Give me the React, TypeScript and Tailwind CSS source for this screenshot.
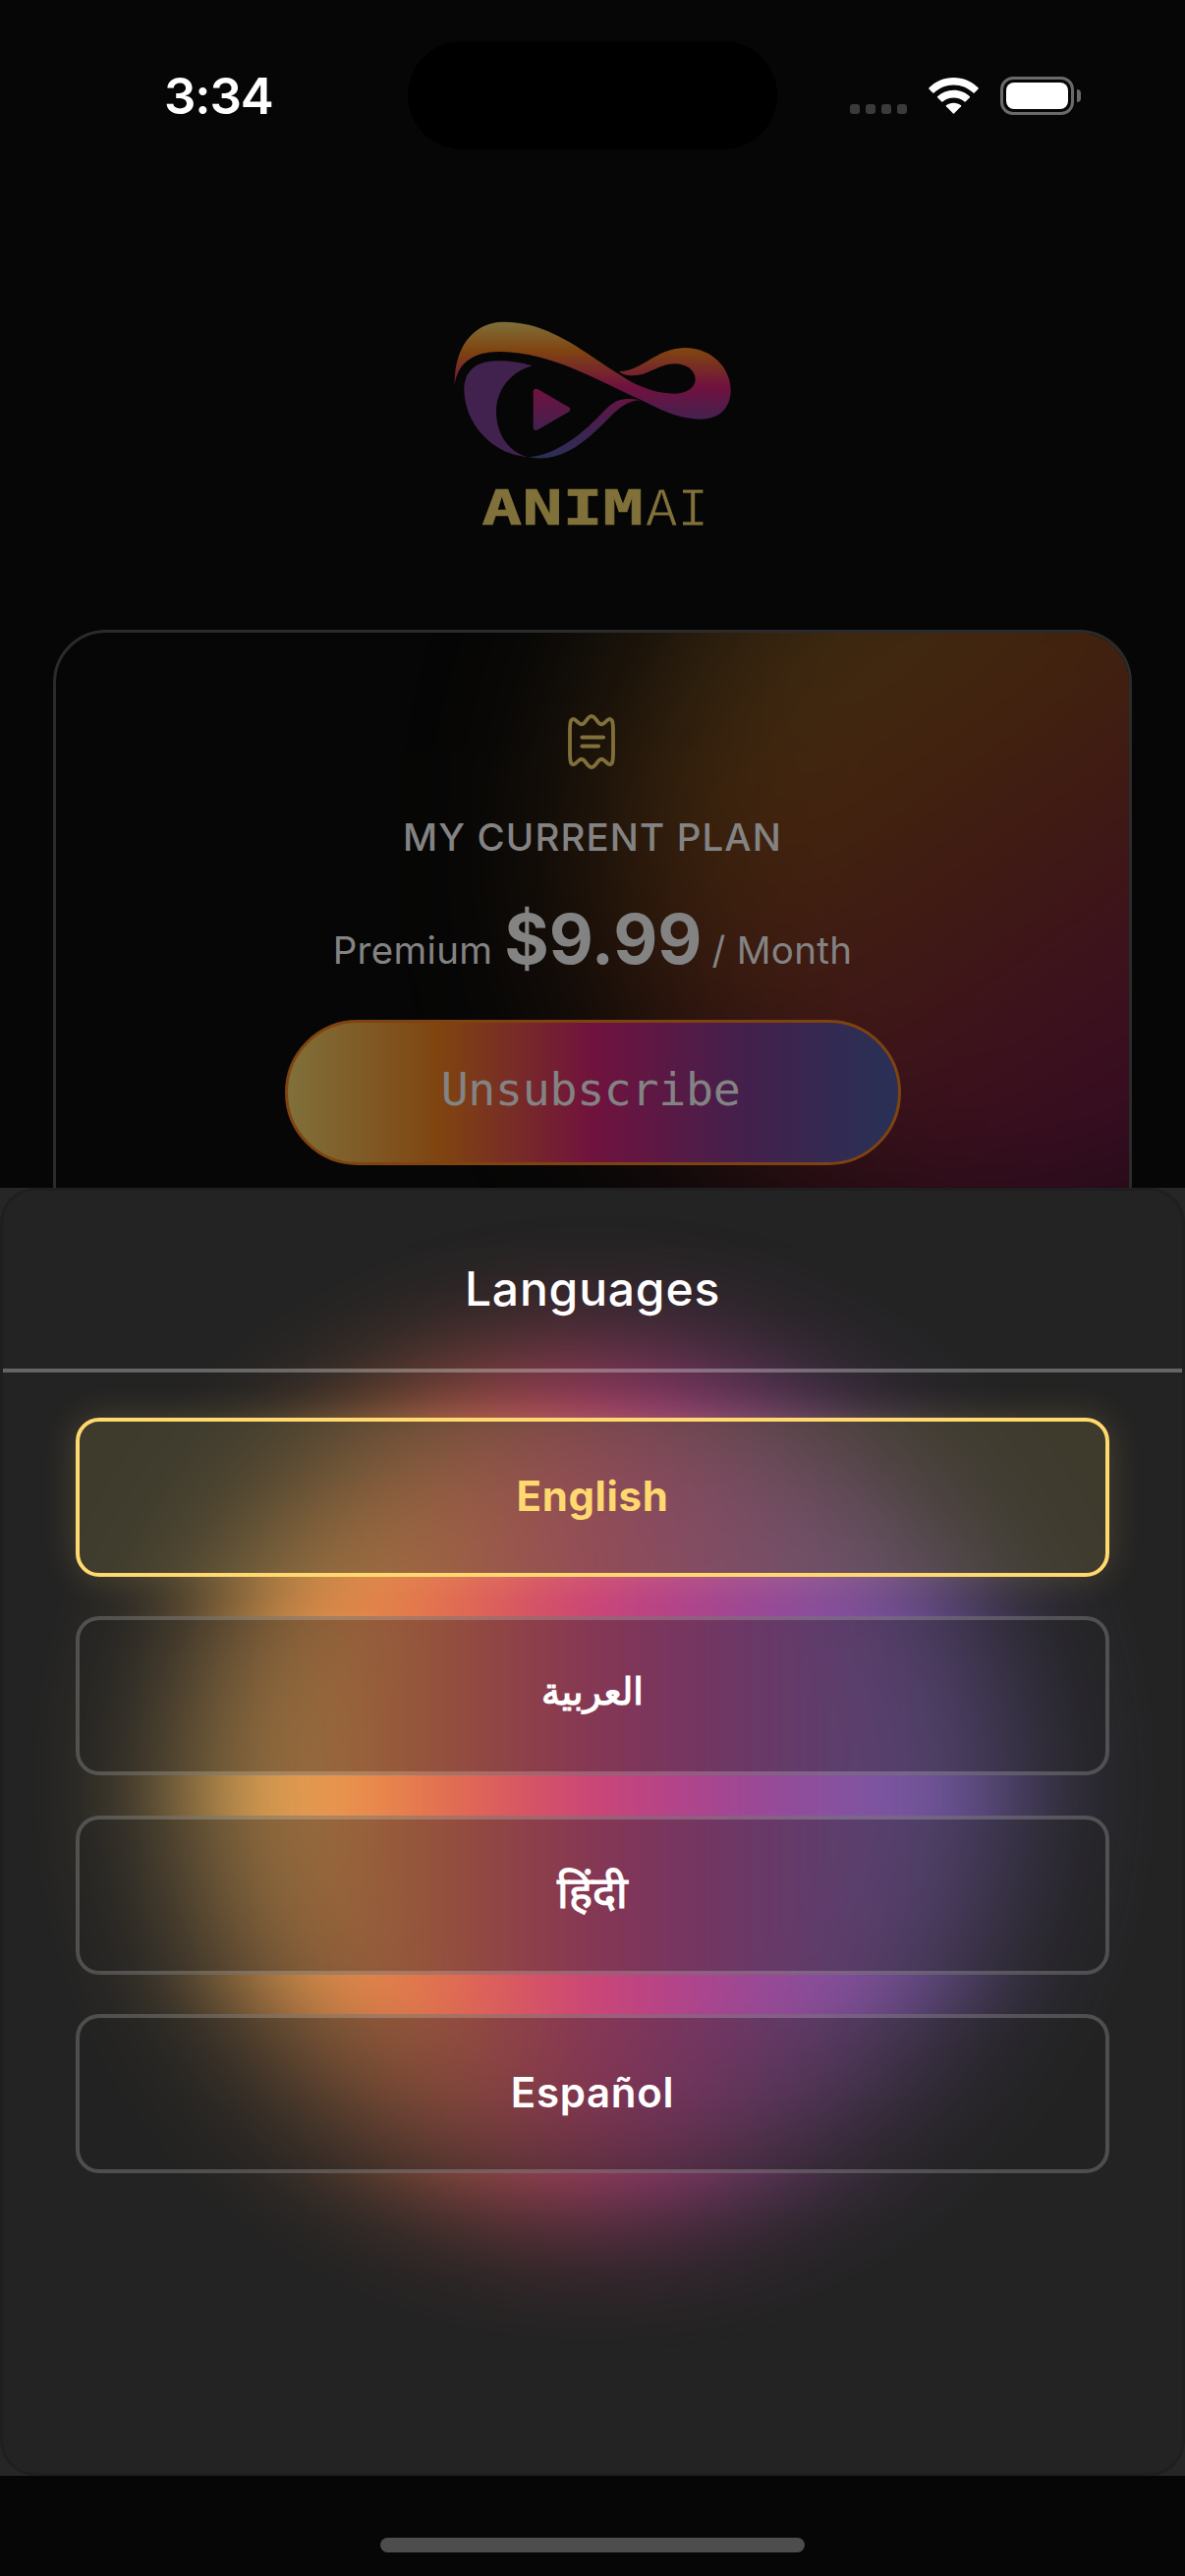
import React from "react";

function StatusBar() {
  return (
    <header className="relative flex h-[193px] shrink-0 items-start justify-between pl-[167px] pr-[106px]">
      <span className="mt-[67px] text-[51px] font-semibold leading-[62px] tracking-[-1.1px] text-white">3:34</span>
      <div className="absolute left-[415px] top-[42px] h-[110px] w-[376px] rounded-full bg-black" />
      <div className="mt-[78px] flex h-[39px] items-start">
        <div className="mt-[28px] flex gap-[6px]">
          {[0, 1, 2, 3].map((i) => (
            <i key={i} className="size-[10px] rounded-[3px] bg-[#3a3a3a]" />
          ))}
        </div>
        <svg className="ml-[22px] mt-[1px] h-[37px] w-[51px]" viewBox="0 0 51 37" fill="#fff">
          <path d="M25.500 0C35.500 0 44 4 50.800 10.500Q51 11 50.600 11.500L46.500 15.800Q46 16 45.500 15.600C40 10.400 33 7.500 25.500 7.500S11 10.400 5.500 15.600Q5 16 4.500 15.800L.4 11.500Q0 11 .3 10.500C7 4 15.500 0 25.500 0Z" />
          <path d="M25.500 12.800C32 12.800 37.500 15.200 42 19.200Q42.300 19.700 42 20.200L37.600 24.600Q37.100 24.900 36.600 24.500C33.500 21.800 29.700 20.400 25.500 20.400S17.500 21.800 14.400 24.500Q13.900 24.900 13.400 24.600L9 20.200Q8.700 19.700 9 19.200C13.500 15.200 19 12.800 25.500 12.800Z" />
          <path d="M25.500 25.700C28.500 25.700 31 26.700 33.100 28.300Q33.500 28.800 33.100 29.300L26 36.500Q25.500 36.900 25 36.500L17.900 29.300Q17.500 28.800 17.900 28.300C20 26.700 22.500 25.700 25.500 25.700Z" />
        </svg>
        <div className="ml-[22px] flex h-[39px] w-[75px] rounded-[13px] border-[3px] border-[#6a6a6a] p-[3px]">
          <div className="h-full w-full rounded-[8px] bg-white" />
        </div>
        <div className="ml-[3px] mt-[13px] h-[13px] w-[4px] rounded-r-full bg-[#6a6a6a]" />
      </div>
    </header>
  );
}

function Logo() {
  return (
    <svg className="ml-[440px] mt-[117px] h-[240px] w-[320px] shrink-0 overflow-visible" viewBox="0 0 960 720">
      <defs>
        <linearGradient id="ribbon" gradientUnits="userSpaceOnUse" x1="0" y1="52" x2="0" y2="350">
          <stop offset="0" stopColor="#7f7039" />
          <stop offset=".3" stopColor="#7f4410" />
          <stop offset=".67" stopColor="#70113f" />
          <stop offset="1" stopColor="#442150" />
        </linearGradient>
        <linearGradient id="sweep" gradientUnits="userSpaceOnUse" x1="0" y1="270" x2="0" y2="466">
          <stop offset="0" stopColor="#6c133f" />
          <stop offset=".5" stopColor="#44204f" />
          <stop offset="1" stopColor="#2b2f55" />
        </linearGradient>
        <linearGradient id="play" x1="0" y1="0" x2="0" y2="1">
          <stop offset="0" stopColor="#70123f" />
          <stop offset="1" stopColor="#43204f" />
        </linearGradient>
      </defs>
      <path
        fill="url(#ribbon)"
        d="M68 247C66 130 125 53 220 53C330 53 420 112 500 167C550 200 590 228 630 247C670 265 705 272 740 272C785 271 803 248 803 229C803 200 775 181 740 181C690 181 660 218 610 217C590 217 575 210 570 204C640 205 680 134 770 132C855 132 911 195 911 262C910 318 875 350 820 350C740 348 690 316 630 288C500 228 360 146 210 144C130 142 76 175 68 247Z"
      />
      <path fill="#41224e" d="M305 187C270 176 235 172 200 172C130 172 97 205 97 262C100 370 190 460 290 465C235 450 195 400 195 325C195 260 240 205 305 187Z" />
      <path fill="url(#play)" d="M308 266Q309 254 321 258L416 313Q426 321 416 328L323 382Q309 388 308 375Z" />
      <path fill="url(#sweep)" d="M636 292C560 277 545 305 500 350C440 408 370 460 293 466C370 480 430 450 500 385C545 345 580 292 636 292Z" />
      <text x="151" y="673" fontSize="149" textLength="493" lengthAdjust="spacingAndGlyphs" fill="#80703a" stroke="#80703a" strokeWidth="2" className="font-['DejaVu_Sans_Mono'] font-bold">ANIM</text>
      <text x="652" y="674" fontSize="166" textLength="192" lengthAdjust="spacingAndGlyphs" fill="#80703a" stroke="#060606" strokeWidth="3" className="font-['Liberation_Mono']">AI</text>
    </svg>
  );
}

function PlanCard() {
  return (
    <section className="relative mx-[54px] mt-[91px] flex h-[900px] shrink-0 flex-col items-center overflow-hidden rounded-[54px] border-[3px] border-[#2b2b2b]">
      <div className="absolute left-[560px] top-[-200px] size-[850px] rounded-full bg-[linear-gradient(145deg,#7f7039_5%,#7f4410_35%,#70123e_70%,#43204c_100%)] opacity-50 blur-[100px]" />
      <svg className="relative right-[1px] mt-[83px] h-[56px] w-[50px]" viewBox="0 0 50 56" fill="none" stroke="#80703a" strokeWidth="3.800" strokeLinecap="round" strokeLinejoin="round">
        <path d="M3 17Q3 9 4.200 6.400Q6 3.600 9 6.200L12.500 9.300Q15 11.200 17.500 9L21.500 4Q25 0 28.500 4L32.500 9Q35 11.200 37.500 9.300L41 6.200Q44 3.600 45.800 6.400Q47 9 47 17V39Q47 47 45.800 49.600Q44 52.400 41 49.800L37.500 46.700Q35 44.800 32.500 47L28.500 52Q25 56 21.500 52L17.500 47Q15 44.800 12.500 46.700L9 49.800Q6 52.400 4.200 49.600Q3 47 3 39Z" />
        <path d="M15.500 23.500H37M15.500 32.500H32" strokeWidth="4.200" />
      </svg>
      <h2 className="relative mt-[46px] text-[38.500px] font-medium leading-[46px] tracking-[1.1px] text-[#838383]">MY CURRENT PLAN</h2>
      <p className="relative mt-[40px] flex h-[82px] items-baseline text-[38.500px] leading-[82px] text-[#838383]">
        <span className="tracking-[0.3px]">Premium</span>
        <span className="ml-[12px] text-[69.500px] font-bold">$9.99</span>
        <span className="ml-[10px] tracking-[0.3px]">/ Month</span>
      </p>
      <button className="relative mt-[41px] flex h-[148px] w-[627px] items-center justify-center rounded-full border-[3px] border-[#7e430f] bg-[linear-gradient(90deg,#80703a_0%,#7f4410_25%,#70123e_50%,#43204c_75%,#2b2f55_97%)] pb-[5px] pr-[4px] font-['DejaVu_Sans_Mono'] text-[46.500px] tracking-[-0.3px] text-[#838383]">
        Unsubscribe
      </button>
    </section>
  );
}

const languages = [
  { label: "English", active: true, text: "font-bold tracking-[0.6px]" },
  { label: "العربية", active: false, text: "relative bottom-[3px] text-[38px] font-normal [-webkit-text-stroke:1.2px_white]" },
  { label: "हिंदी", active: false, text: "relative bottom-[1px] text-[45px] font-medium [-webkit-text-stroke:1.2px_white]" },
  { label: "Español", active: false, text: "font-semibold tracking-[0.7px]" },
];

function LanguageSheet() {
  return (
    <div className="absolute inset-x-0 top-[1209px] h-[1311px] bg-[#262626]">
      <div className="relative h-full overflow-hidden rounded-[36px] border-[3px] border-[#1f1f1f] bg-[#232323]">
        <div className="absolute left-[188px] top-[183px] size-[840px] rounded-full bg-[linear-gradient(90deg,#ffd970_0%,#fd9a48_20%,#f06a54_35%,#de3f84_49%,#9a4ea6_72%,#7864b6_92%)] opacity-[0.92] blur-[74px]" />
        <div className="relative">
          <h1 className="h-[181px] pt-[70px] text-center text-[48px] font-medium leading-[60px] tracking-[0.8px] text-white">Languages</h1>
          <div className="h-[4px] bg-[#ffffff4d]" />
          <ul className="flex flex-col gap-[40.500px] px-[74px] pt-[45.500px]">
            {languages.map((l) => (
              <li
                key={l.label}
                className={
                  "flex h-[162px] items-center justify-center rounded-[24px] border-[4px] pb-[3px] text-[42px] " +
                  (l.active
                    ? "border-[#ffd970] bg-[#5a533880] text-[#ffd970] shadow-[0_0_36px_#ffd97030]"
                    : "border-[#ffffff33] bg-[#23232368] text-white")
                }
              >
                <span className={l.text}>{l.label}</span>
              </li>
            ))}
          </ul>
        </div>
      </div>
    </div>
  );
}

export default function App() {
  return (
    <main className="relative flex h-[2622px] w-[1206px] flex-col overflow-hidden bg-[#060606] font-['Inter','DejaVu_Sans',sans-serif]">
      <StatusBar />
      <Logo />
      <PlanCard />
      <LanguageSheet />
      <div className="absolute bottom-[24px] left-[387px] h-[15px] w-[432px] rounded-full bg-[#4d4d4d]" />
    </main>
  );
}
